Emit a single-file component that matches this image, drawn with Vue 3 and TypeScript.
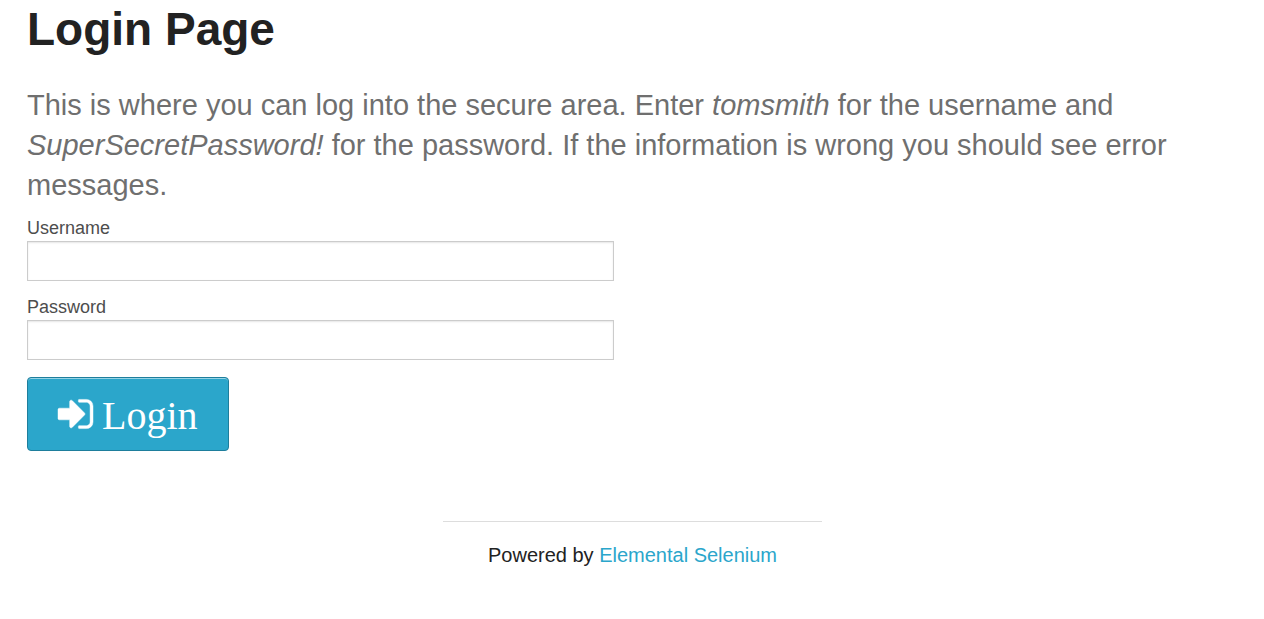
<script setup lang="ts">
import { ref } from 'vue'

const username = ref('')
const password = ref('')
</script>

<template>
  <div class="page">
    <main>
      <h1>Login Page</h1>
      <p class="intro">
        This is where you can log into the secure area. Enter <em>tomsmith</em> for the username and
        <em>SuperSecretPassword!</em> for the password. If the information is wrong you should see
        error messages.
      </p>
      <form @submit.prevent>
        <div class="row">
          <div class="field">
            <label for="username">Username</label>
            <input id="username" v-model="username" type="text" name="username" />
          </div>
        </div>
        <div class="row">
          <div class="field">
            <label for="password">Password</label>
            <input id="password" v-model="password" type="password" name="password" />
          </div>
        </div>
        <button type="submit">
          <svg viewBox="0 256 1536 1280" aria-hidden="true">
            <path
              d="M1184 896q0 26-19 45l-544 544q-19 19-45 19t-45-19-19-45v-288h-448q-26 0-45-19t-19-45v-384q0-26 19-45t45-19h448v-288q0-26 19-45t45-19 45 19l544 544q19 19 19 45zm352-352v704q0 119-84.5 203.5t-203.5 84.5h-320q-13 0-22.5-9.5t-9.5-22.5q0-4-1-20t-.5-26.5 3-23.5 10-19.5 20.5-6.5h320q66 0 113-47t47-113v-704q0-66-47-113t-113-47h-312l-11.5-1-11.5-3-8-5.5-7-9-2-13.5q0-4-1-20t-.5-26.5 3-23.5 10-19.5 20.5-6.5h320q119 0 203.5 84.5t84.5 203.5z"
            />
          </svg>
          <span>Login</span>
        </button>
      </form>
    </main>
    <footer>
      <div class="credit">
        <hr />
        <p>Powered by <a href="#">Elemental Selenium</a></p>
      </div>
    </footer>
  </div>
</template>

<style>
body {
  margin: 0;
  background: #fff;
}
</style>

<style scoped>
.page {
  padding: 0 26px 0 27px;
  font-family: 'Liberation Sans', Arial, sans-serif;
  color: #222;
}

h1 {
  margin: 0;
  padding-bottom: 26px;
  font-size: 46px;
  line-height: 59px;
  font-weight: 700;
}

.intro {
  margin: 0 0 12px;
  font-size: 29px;
  line-height: 40px;
  color: #6f6f6f;
}

.row {
  display: grid;
  grid-template-columns: 1fr 1fr;
  column-gap: 37px;
  margin-bottom: 15px;
}

.field {
  display: flex;
  flex-direction: column;
  gap: 2px;
}

label {
  font-size: 18px;
  line-height: 22px;
  color: #4d4d4d;
}

input {
  box-sizing: border-box;
  width: 100%;
  height: 40px;
  padding: 8px;
  border: 1px solid #ccc;
  border-radius: 0;
  background: #fff;
  box-shadow: inset 0 1px 2px rgba(0, 0, 0, 0.1);
  font: inherit;
  font-size: 18px;
  color: #333;
}

button {
  display: flex;
  align-items: center;
  gap: 9px;
  box-sizing: border-box;
  height: 74px;
  margin-top: 17px;
  padding: 0 30px;
  border: 1px solid #1e7e9c;
  border-radius: 4px;
  background: #2ba6cb;
  box-shadow: inset 0 1px 0 rgba(255, 255, 255, 0.5);
  font-family: 'Liberation Serif', 'Times New Roman', serif;
  font-size: 40px;
  line-height: 40px;
  color: #fff;
  cursor: pointer;
}

button span {
  padding-top: 4px;
}

svg {
  width: 35px;
  height: 30px;
  fill: currentColor;
  stroke: currentColor;
  stroke-width: 20;
  overflow: visible;
}

footer {
  display: grid;
  grid-template-columns: repeat(3, 1fr);
  column-gap: 36px;
  margin-top: 70px;
}

.credit {
  grid-column: 2;
  text-align: center;
}

hr {
  margin: 0 0 17px;
  border: 0;
  border-top: 1px solid #ddd;
}

.credit p {
  margin: 0;
  font-size: 20px;
  line-height: 32px;
}

a {
  color: #2ba6cb;
  text-decoration: none;
}
</style>
